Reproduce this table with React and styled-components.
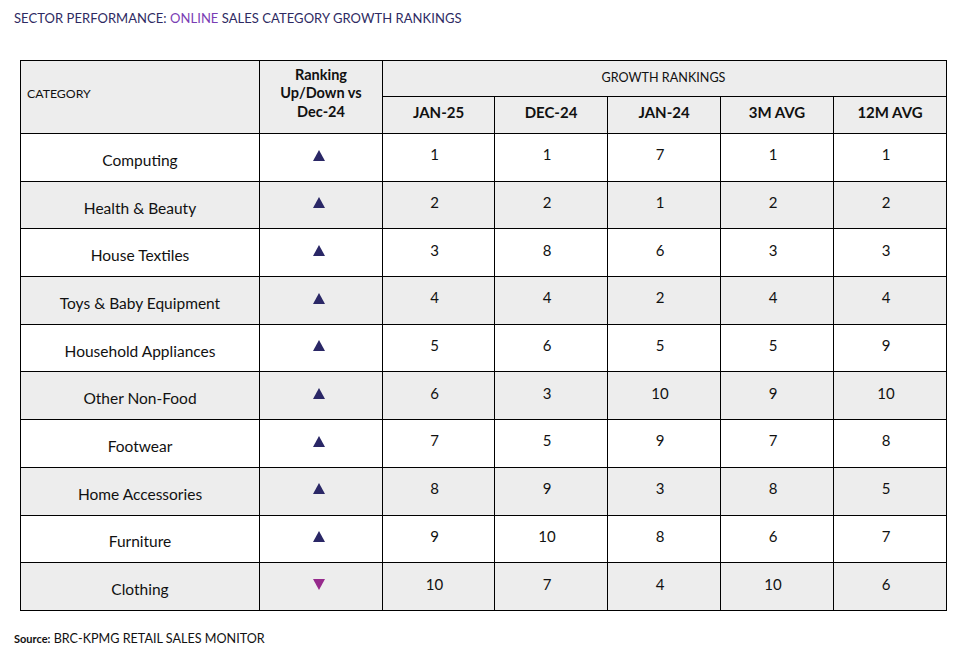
import React from "react";
import styled, { createGlobalStyle } from "styled-components";

const Global = createGlobalStyle`
  html, body { margin: 0; padding: 0; background: #fff; }
  body { font-family: Lato, "Open Sans", Arial, sans-serif; color: #111; }
`;

const Page = styled.div`
  width: 967px;
  height: 649px;
  padding: 10px 0 0 0;
  box-sizing: border-box;
  display: flex;
  flex-direction: column;
`;

const Title = styled.h1`
  margin: 0 0 0 14px;
  font-size: 13px;
  font-weight: 400;
  color: #2e2a62;
  letter-spacing: 0.05px;
  line-height: 16px;
`;

const Accent = styled.span`
  color: #7a3db4;
`;

const Table = styled.table`
  margin: 34px 0 0 20px;
  width: 926px;
  border-collapse: collapse;
  table-layout: fixed;
  font-size: 15px;
`;

const Th = styled.th`
  border: 1px solid #000;
  background: #ededed;
  font-weight: ${(p) => (p.$bold ? 700 : 400)};
  font-size: ${(p) => p.$size || "15px"};
  text-align: ${(p) => p.$align || "center"};
  padding: ${(p) => p.$pad || "0"};
  vertical-align: middle;
  line-height: ${(p) => p.$lh || "17px"};
  color: #111;
`;

const HeadRow = styled.tr`
  height: ${(p) => p.$h}px;
`;

const Row = styled.tr`
  height: 47.7px;
  background: ${(p) => (p.$alt ? "#ededed" : "#fff")};
`;

const Td = styled.td`
  border: 1px solid #000;
  text-align: center;
  vertical-align: middle;
  padding: ${(p) => p.$pad || "0"};
  font-size: ${(p) => p.$size || "15px"};
  line-height: 17px;
`;

const Tri = styled.span`
  display: inline-block;
  width: 0;
  height: 0;
  border-left: 6.5px solid transparent;
  border-right: 6.5px solid transparent;
  ${(p) =>
    p.$down
      ? "border-top: 11px solid #962a8c;"
      : "border-bottom: 11px solid #2a2766;"}
  vertical-align: middle;
`;

const Footer = styled.div`
  margin: 20px 0 0 14px;
  font-size: 12.6px;
  color: #111;
`;

const SourceLabel = styled.b`
  font-size: 11px;
  font-weight: 700;
`;

const rows = [
  ["Computing", "up", 1, 1, 7, 1, 1],
  ["Health & Beauty", "up", 2, 2, 1, 2, 2],
  ["House Textiles", "up", 3, 8, 6, 3, 3],
  ["Toys & Baby Equipment", "up", 4, 4, 2, 4, 4],
  ["Household Appliances", "up", 5, 6, 5, 5, 9],
  ["Other Non-Food", "up", 6, 3, 10, 9, 10],
  ["Footwear", "up", 7, 5, 9, 7, 8],
  ["Home Accessories", "up", 8, 9, 3, 8, 5],
  ["Furniture", "up", 9, 10, 8, 6, 7],
  ["Clothing", "down", 10, 7, 4, 10, 6],
];

const widths = [239, 123, 112, 113, 113, 113, 113];

export default function App() {
  return (
    <Page>
      <Global />
      <Title>
        SECTOR PERFORMANCE: <Accent>ONLINE</Accent> SALES CATEGORY GROWTH RANKINGS
      </Title>
      <Table>
        <colgroup>
          {widths.map((w, i) => (
            <col key={i} style={{ width: w }} />
          ))}
        </colgroup>
        <thead>
          <HeadRow $h={36}>
            <Th rowSpan={2} $size="12.3px" $align="left" $pad="0 0 7px 6px">
              CATEGORY
            </Th>
            <Th rowSpan={2} $bold $size="14.5px" $lh="18.5px" $pad="0 0 7px 0">
              Ranking
              <br />
              Up/Down vs
              <br />
              Dec-24
            </Th>
            <Th colSpan={5} $size="12.6px" $pad="0 2px 2px 0">
              GROWTH RANKINGS
            </Th>
          </HeadRow>
          <HeadRow $h={37}>
            <Th $bold $pad="0 0 5px 0">JAN-25</Th>
            <Th $bold $pad="0 0 5px 0">DEC-24</Th>
            <Th $bold $pad="0 0 5px 0">JAN-24</Th>
            <Th $bold $pad="0 0 5px 0">3M AVG</Th>
            <Th $bold $pad="0 0 5px 0">12M AVG</Th>
          </HeadRow>
        </thead>
        <tbody>
          {rows.map((r, i) => (
            <Row key={r[0]} $alt={i % 2 === 1}>
              <Td $size="15.5px" $pad="6px 0 0 0">{r[0]}</Td>
              <Td $pad="0 5px 8px 0">
                <Tri $down={r[1] === "down"} />
              </Td>
              {r.slice(2).map((v, j) => (
                <Td key={j} $pad="0 8px 5px 0">
                  {v}
                </Td>
              ))}
            </Row>
          ))}
        </tbody>
      </Table>
      <Footer>
        <SourceLabel>Source:</SourceLabel> BRC-KPMG RETAIL SALES MONITOR
      </Footer>
    </Page>
  );
}
